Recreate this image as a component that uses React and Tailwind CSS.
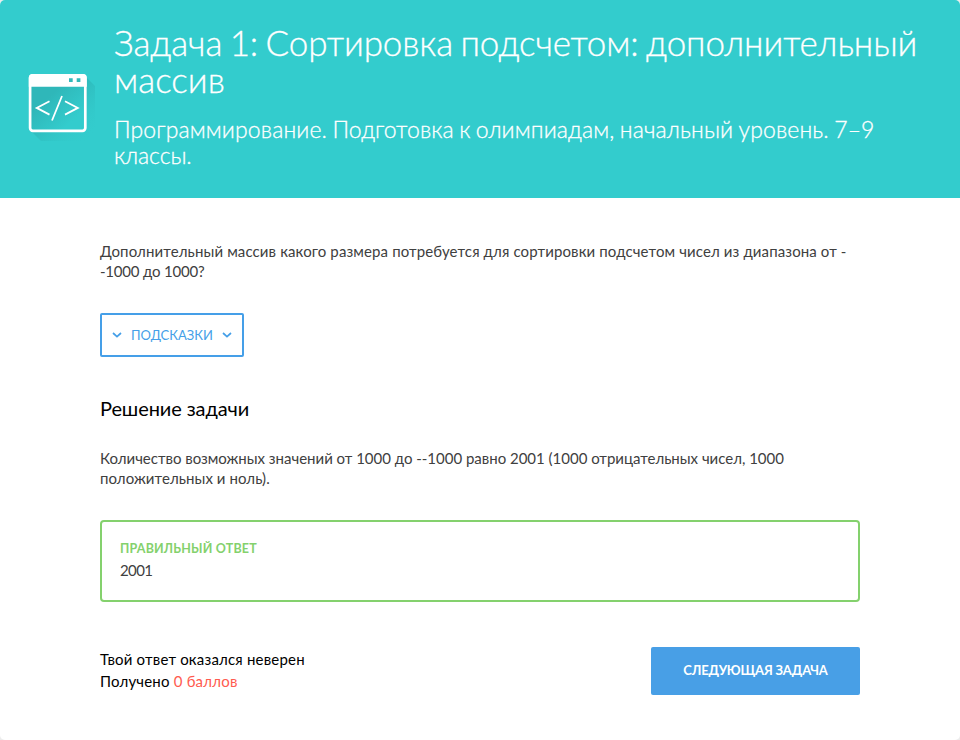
function CodeWindowIcon() {
  return (
    <svg className="block" width="70" height="72" viewBox="0 0 70 72" fill="none" aria-hidden="true">
      <defs>
        <linearGradient id="cast" x1="8" y1="8" x2="62" y2="66" gradientUnits="userSpaceOnUse">
          <stop offset="0.3" stopColor="#2bb0b2" stopOpacity="0.9" />
          <stop offset="1" stopColor="#33cccd" stopOpacity="0" />
        </linearGradient>
        <linearGradient id="pane" x1="8" y1="16" x2="46" y2="58" gradientUnits="userSpaceOnUse">
          <stop offset="0.25" stopColor="#2fb7b9" />
          <stop offset="0.85" stopColor="#33cccd" />
        </linearGradient>
      </defs>
      <path d="M57 3L67 13V59L58 68H13L3 58Z" fill="url(#cast)" />
      <rect x="2.1" y="2.3" width="55.200" height="55.600" rx="2.800" fill="url(#pane)" stroke="#fff" strokeWidth="2.700" />
      <path d="M0.800 4.500a3.500 3.500 0 0 1 3.500-3.500h51a3.500 3.500 0 0 1 3.500 3.500v9.200H0.800z" fill="#fff" />
      <path d="M41 5.200h3.700v3.700H41zM48.700 5.200h3.700v3.700h-3.700z" fill="#33b9ba" />
      <path d="M21.500 28.200L8.700 34.900L21.500 41.600M37 28.200L49.800 34.900L37 41.600M34 23L24 47.500" stroke="#fff" strokeWidth="1.800" />
    </svg>
  );
}

function Chevron() {
  return (
    <svg className="block" width="10" height="6" viewBox="0 0 10 6" fill="none" aria-hidden="true">
      <path d="M1 1L5 4.600L9 1" stroke="#459fe8" strokeWidth="1.700" />
    </svg>
  );
}

export default function App() {
  return (
    <div className="h-[740px] w-[960px] bg-[#ececec] font-['Lato','Open_Sans',sans-serif]">
      <main className="h-full overflow-hidden rounded-[5px] bg-white">
        <header className="flex h-[198px] bg-[#33cccd] pl-7 text-white">
          <div className="w-[86px] shrink-0 pt-[73px]">
            <CodeWindowIcon />
          </div>
          <div className="pt-[24px] font-light whitespace-nowrap [-webkit-text-stroke:0.3px_white]">
            <h1 className="text-[35px] leading-[37px]">
              <span className="block tracking-[-0.1px] [word-spacing:-2px]">Задача 1: Сортировка подсчетом: дополнительный</span>
              <span className="block">массив</span>
            </h1>
            <p className="mt-[18px] text-[23px] leading-[27px]">
              <span className="block tracking-[0.12px] [word-spacing:-1px]">Программирование. Подготовка к олимпиадам, начальный уровень. 7–9</span>
              <span className="-mt-px block tracking-[-0.1px]">классы.</span>
            </p>
          </div>
        </header>

        <section className="px-[100px] pt-[43px] text-[15px] leading-5 whitespace-nowrap text-[#404040]">
          <p>
            <span className="block tracking-[0.122px]">Дополнительный массив какого размера потребуется для сортировки подсчетом чисел из диапазона от -</span>
            <span className="block tracking-[-0.2px]">-1000 до 1000?</span>
          </p>

          <button className="mt-8 flex h-11 w-36 items-center justify-between rounded-[2px] border-2 border-[#459fe8] px-2.5 text-[13px] text-[#459fe8]">
            <Chevron />
            <span>ПОДСКАЗКИ</span>
            <Chevron />
          </button>

          <h2 className="mt-[39px] text-[20px] leading-6 tracking-[-0.1px] text-black">Решение задачи</h2>

          <p className="mt-7">
            <span className="block tracking-[-0.01px]">Количество возможных значений от 1000 до --1000 равно 2001 (1000 отрицательных чисел, 1000</span>
            <span className="block tracking-[0.07px]">положительных и ноль).</span>
          </p>

          <div className="mt-8 h-[82px] rounded-[4px] border-2 border-[#84d16d] px-[18px] pt-[17px]">
            <div className="text-[12.500px] font-bold tracking-[0.18px] text-[#84d16d]">ПРАВИЛЬНЫЙ ОТВЕТ</div>
            <div className="mt-px tracking-[-0.6px]">2001</div>
          </div>

          <footer className="mt-[45px] flex h-12 items-center justify-between text-black">
            <div className="pb-0.5 leading-[22px] tracking-[0.19px]">
              <div>Твой ответ оказался неверен</div>
              <div>
                Получено <span className="text-[#ff5b4f]">0 баллов</span>
              </div>
            </div>
            <button className="flex h-12 w-[209px] items-center justify-center rounded-[2px] bg-[#489fe6] pb-[3px] text-[13px] font-bold tracking-[-0.2px] text-white">
              <span>СЛЕДУЮЩАЯ ЗАДАЧА</span>
            </button>
          </footer>
        </section>
      </main>
    </div>
  );
}
